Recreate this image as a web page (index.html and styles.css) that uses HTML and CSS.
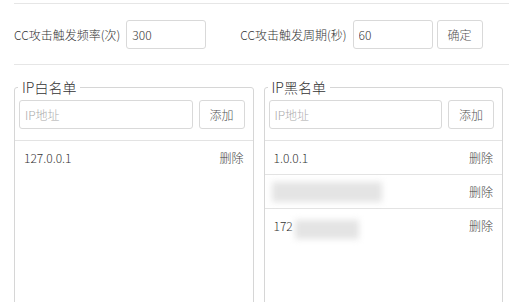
FILE: index.html
```html
<!DOCTYPE html>
<html lang="zh-CN">
<head>
<meta charset="utf-8">
<title>CC</title>
<link rel="stylesheet" href="styles.css">
</head>
<body>
<div class="page">
  <div class="settings">
    <label class="field">
      <span class="label">CC攻击触发频率(次)</span>
      <input class="input short" type="text" value="300">
    </label>
    <label class="field second">
      <span class="label">CC攻击触发周期(秒)</span>
      <input class="input short" type="text" value="60">
    </label>
    <button class="btn">确定</button>
  </div>
  <div class="lists">
    <fieldset class="box">
      <legend class="legend">IP白名单</legend>
      <div class="add-row">
        <input class="input grow" type="text" placeholder="IP地址">
        <button class="btn">添加</button>
      </div>
      <div class="list">
        <div class="row"><span class="ip">127.0.0.1</span><span class="del">删除</span></div>
      </div>
    </fieldset>
    <fieldset class="box">
      <legend class="legend">IP黑名单</legend>
      <div class="add-row">
        <input class="input grow" type="text" placeholder="IP地址">
        <button class="btn">添加</button>
      </div>
      <div class="list">
        <div class="row"><span class="ip">1.0.0.1</span><span class="del">删除</span></div>
        <div class="row"><span class="ip"><span class="blur wide"></span></span><span class="del">删除</span></div>
        <div class="row"><span class="ip">172<span class="blur narrow"></span></span><span class="del">删除</span></div>
      </div>
    </fieldset>
  </div>
</div>
</body>
</html>
```
FILE: styles.css
```css
* { box-sizing: border-box; }
html, body { margin: 0; background: #fff; }
body {
  font-family: "Noto Sans CJK SC", "Noto Sans", sans-serif;
  font-size: 12px;
  font-weight: 300;
  color: #333;
  overflow: hidden;
}
.page {
  padding: 3px 3px 0 14px;
}
.settings {
  display: flex;
  align-items: center;
  height: 62px;
  border-top: 1px solid #e6e6e6;
  border-bottom: 1px solid #e6e6e6;
}
.field {
  display: flex;
  align-items: center;
  gap: 6px;
}
.field.second { margin-left: 34px; }
.label { white-space: nowrap; }
.input {
  height: 29px;
  border: 1px solid #d9d9d9;
  border-radius: 3px;
  padding: 0 5px;
  font-family: inherit;
  font-size: 12px;
  font-weight: 300;
  color: #333;
  outline: none;
  background: #fff;
}
.input::placeholder { color: #aaa; }
.short { width: 80px; }
.grow { flex: 1; min-width: 0; }
.btn {
  height: 29px;
  width: 46px;
  border: 1px solid #d9d9d9;
  border-radius: 3px;
  background: #fff;
  color: #555;
  font-family: inherit;
  font-size: 12px;
  font-weight: 300;
  padding: 0;
  margin-left: 4px;
}
.lists {
  display: flex;
  gap: 10px;
  margin-top: 13px;
  padding-right: 6px;
}
.box {
  flex: 1;
  min-width: 0;
  margin: 0;
  padding: 0;
  border: 1px solid #d6d6d6;
  border-radius: 3px;
  height: 230px;
}
.legend {
  font-size: 14px;
  line-height: 18px;
  padding: 0 4px;
  margin-left: 3px;
  color: #333;
}
.add-row {
  display: flex;
  gap: 6px;
  padding: 4px 8px 11px 4px;
}
.add-row .btn { margin-left: 0; }
.list { border-top: 1px solid #e3e3e3; }
.row {
  display: flex;
  justify-content: space-between;
  align-items: center;
  height: 33px;
  padding: 0 9px 0 9px;
}
.row + .row { border-top: 1px solid #e3e3e3; height: 34px; }
.ip { display: flex; align-items: center; }
.del { color: #444; }
.blur {
  display: inline-block;
  background: #e4e4e4;
  filter: blur(3px);
  height: 20px;
}
.blur.wide { width: 110px; margin-left: -2px; }
.blur.narrow { width: 64px; height: 19px; margin-top: 8px; margin-left: 2px; }
```
